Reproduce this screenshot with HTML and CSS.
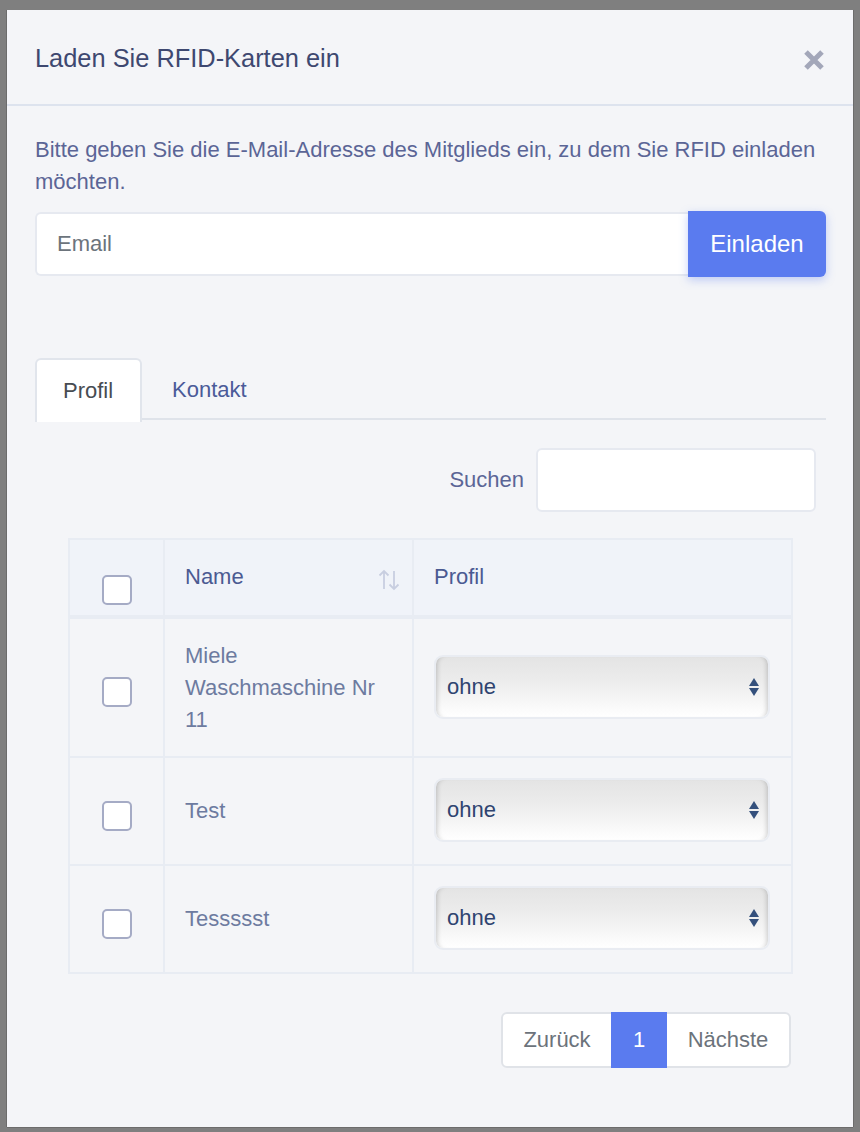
FILE: index.html
```html
<!DOCTYPE html>
<html lang="de">
<head>
<meta charset="utf-8">
<title>Laden Sie RFID-Karten ein</title>
<link rel="stylesheet" href="styles.css">
</head>
<body>
<div class="backdrop">
  <div class="modal">
    <div class="modal-header">
      <h1 class="modal-title">Laden Sie RFID-Karten ein</h1>
      <button class="close" aria-label="Schließen">
        <svg width="22" height="22" viewBox="0 0 22 22"><path d="M3 3 L19 19 M19 3 L3 19" stroke="#a3a7b9" stroke-width="5" stroke-linecap="butt"/></svg>
      </button>
    </div>
    <div class="modal-body">
      <p class="intro">Bitte geben Sie die E-Mail-Adresse des Mitglieds ein, zu dem Sie RFID einladen möchten.</p>
      <div class="input-group">
        <input class="email" type="text" placeholder="Email">
        <button class="btn-invite">Einladen</button>
      </div>

      <ul class="tabs">
        <li class="tab active">Profil</li>
        <li class="tab">Kontakt</li>
      </ul>

      <div class="search-row">
        <label class="search-label">Suchen</label>
        <input class="search-input" type="text">
      </div>

      <table class="grid">
        <colgroup>
          <col class="c-check">
          <col class="c-name">
          <col class="c-profile">
        </colgroup>
        <thead>
          <tr>
            <th class="check-cell head-check"><span class="checkbox"></span></th>
            <th class="name-head"><span>Name</span>
              <svg class="sort" width="24" height="24" viewBox="0 0 24 24"><path d="M7 3 V21 M2.5 7.5 L7 3 L11.5 7.5 M17 3 V21 M12.5 16.5 L17 21 L21.5 16.5" fill="none" stroke="#c8cee0" stroke-width="1.8"/></svg>
            </th>
            <th>Profil</th>
          </tr>
        </thead>
        <tbody>
          <tr>
            <td class="check-cell"><span class="checkbox"></span></td>
            <td class="name multi">Miele<br>Waschmaschine Nr<br>11</td>
            <td class="profile"><div class="select"><span>ohne</span><i class="arrows"></i></div></td>
          </tr>
          <tr>
            <td class="check-cell"><span class="checkbox"></span></td>
            <td class="name">Test</td>
            <td class="profile"><div class="select"><span>ohne</span><i class="arrows"></i></div></td>
          </tr>
          <tr>
            <td class="check-cell"><span class="checkbox"></span></td>
            <td class="name">Tessssst</td>
            <td class="profile"><div class="select"><span>ohne</span><i class="arrows"></i></div></td>
          </tr>
        </tbody>
      </table>

      <div class="pager">
        <div class="pagination">
          <span class="page">Zurück</span>
          <span class="page current">1</span>
          <span class="page">Nächste</span>
        </div>
      </div>
    </div>
  </div>
</div>
</body>
</html>
```
FILE: styles.css
```css
* { box-sizing: border-box; }
html, body { margin: 0; padding: 0; }
body {
  background: #7f7f7f;
  font-family: "Liberation Sans", Arial, Helvetica, sans-serif;
  width: 860px;
  height: 1132px;
  overflow: hidden;
}
.backdrop {
  padding: 10px 7px 0 7px;
}
.modal {
  width: 846px;
  height: 1117px;
  background: #f4f5f8;
  box-shadow: -1px 0 0 #6c6c6c, 1px 0 0 #6c6c6c, 0 1px 0 #6c6c6c;
}
.modal-header {
  height: 96px;
  display: flex;
  align-items: center;
  justify-content: space-between;
  padding: 0 28px 0 28px;
  border-bottom: 2px solid #dde3ee;
}
.modal-title {
  margin: 0;
  font-size: 25.4px;
  font-weight: normal;
  color: #3e4870;
  position: relative;
  top: 1px;
}
.close {
  border: 0;
  background: none;
  padding: 0;
  width: 22px;
  height: 22px;
  display: flex;
  position: relative;
  top: 3px;
}
.modal-body {
  padding: 28px 27px 0 28px;
}
.intro {
  margin: 0;
  font-size: 22px;
  line-height: 32px;
  color: #5b6596;
}
.input-group {
  margin-top: 14px;
  display: flex;
  height: 64px;
}
.email {
  flex: 1;
  height: 64px;
  border: 2px solid #e6e9f0;
  border-right: 0;
  border-radius: 6px 0 0 6px;
  background: #fff;
  padding: 0 20px;
  font-family: inherit;
  font-size: 22px;
  color: #495057;
  outline: none;
}
.email::placeholder { color: #6c747c; }
.btn-invite {
  width: 138px;
  height: 66px;
  margin-top: -1px;
  border: 0;
  border-radius: 0 6px 6px 0;
  background: #5a7bef;
  color: #fff;
  font-family: inherit;
  font-size: 24px;
  box-shadow: 0 3px 10px rgba(90, 123, 239, 0.35);
}
.tabs {
  list-style: none;
  margin: 82px 0 0 0;
  padding: 0;
  display: flex;
  border-bottom: 2px solid #dfe3ea;
  height: 62px;
}
.tab {
  height: 62px;
  padding: 0 26px;
  display: flex;
  align-items: center;
  font-size: 22px;
  color: #4b5b99;
  border: 2px solid transparent;
  border-bottom: 0;
  border-radius: 6px 6px 0 0;
}
.tab.active {
  background: #fff;
  border-color: #e1e5ec;
  color: #474c52;
  height: 64px;
  width: 107px;
}
.tab + .tab { padding-left: 28px; }
.search-row {
  margin-top: 28px;
  display: flex;
  justify-content: flex-end;
  align-items: center;
  padding-right: 10px;
}
.search-label {
  font-size: 22px;
  color: #5b6596;
  margin-right: 12px;
}
.search-input {
  width: 280px;
  height: 64px;
  border: 2px solid #e6e9f0;
  border-radius: 6px;
  background: #fff;
  outline: none;
}
.grid {
  margin: 26px 0 0 33px;
  width: 723px;
  border-collapse: collapse;
  table-layout: fixed;
  border: 2px solid #e8ecf3;
}
.c-check { width: 95px; }
.c-name { width: 249px; }
.c-profile { width: 379px; }
.grid th, .grid td {
  border: 2px solid #e8ecf3;
  font-size: 22px;
  text-align: left;
  vertical-align: middle;
}
.grid th {
  background: #f0f3f9;
  color: #4b5a92;
  font-weight: normal;
  height: 78px;
  padding: 0 20px 2px 20px;
  border-bottom: 4px solid #e8ecf3;
}
.name-head {
  position: relative;
}
.sort {
  position: absolute;
  right: 11px;
  top: 28px;
}
.check-cell {
  text-align: center !important;
  padding: 0 !important;
}
.checkbox {
  display: block;
  width: 30px;
  height: 30px;
  margin: 9px auto 0 auto;
  border: 2px solid #a5abc5;
  border-radius: 5px;
  background: #fff;
}
.head-check .checkbox { margin-top: 24px; }
.grid td {
  padding: 21px 20px;
  color: #6d7ba0;
  line-height: 32px;
}
.grid td.multi {
  padding: 21px 20px 20px 20px;
}
.grid td.profile {
  padding: 21px 21px 21px 20px;
}
.select {
  height: 64px;
  border: 2px solid #e9ecf2;
  border-radius: 9px;
  background: linear-gradient(to bottom, #e4e4e4 0%, #ececec 40%, #ffffff 100%);
  box-shadow: inset 5px 0 5px -4px rgba(0,0,0,0.2), inset -5px 0 5px -4px rgba(0,0,0,0.2);
  display: flex;
  align-items: center;
  justify-content: space-between;
  padding: 0 9px 0 11px;
  color: #2f4470;
  font-size: 22px;
  position: relative;
  top: -1px;
}
.arrows {
  position: relative;
  width: 10px;
  height: 20px;
  display: block;
}
.arrows::before, .arrows::after {
  content: "";
  position: absolute;
  left: 0;
  border-left: 5px solid transparent;
  border-right: 5px solid transparent;
}
.arrows::before {
  top: 1px;
  border-bottom: 8px solid #34507c;
}
.arrows::after {
  bottom: 1px;
  border-top: 8px solid #34507c;
}
.pager {
  margin-top: 38px;
  display: flex;
  justify-content: flex-end;
  padding-right: 35px;
}
.pagination {
  display: flex;
  height: 56px;
  border: 2px solid #e0e3e8;
  border-radius: 6px;
  background: #fff;
}
.page {
  display: flex;
  align-items: center;
  justify-content: center;
  font-size: 22px;
  color: #6c737b;
  padding: 0 10px;
}
.page:first-child { width: 108px; }
.page.current {
  width: 56px;
  background: #5a7bef;
  color: #fff;
  margin: -2px 0;
  height: 56px;
}
.page:last-child { width: 122px; }
```
